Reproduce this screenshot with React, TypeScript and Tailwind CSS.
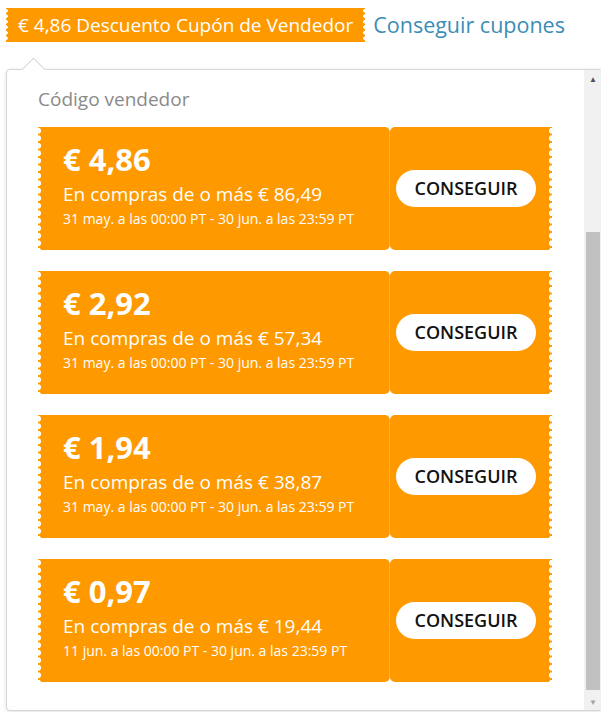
import React from "react";

const coupons = [
  { amount: "€ 4,86", min: "€ 86,49", dates: "31 may. a las 00:00 PT - 30 jun. a las 23:59 PT" },
  { amount: "€ 2,92", min: "€ 57,34", dates: "31 may. a las 00:00 PT - 30 jun. a las 23:59 PT" },
  { amount: "€ 1,94", min: "€ 38,87", dates: "31 may. a las 00:00 PT - 30 jun. a las 23:59 PT" },
  { amount: "€ 0,97", min: "€ 19,44", dates: "11 jun. a las 00:00 PT - 30 jun. a las 23:59 PT" },
];

function Coupon({ amount, min, dates }: { amount: string; min: string; dates: string }) {
  return (
    <div className="flex h-[123px] text-white">
      {/* left: details */}
      <div className="relative w-[352px] rounded-r-[5px] border-r border-dotted border-[#ffc46e] bg-[#ff9900] pl-[25px] pt-[14px]">
        <span className="absolute -left-[4px] top-0 bottom-0 w-[8px] bg-[radial-gradient(circle,#fff_2.8px,transparent_3.3px)] bg-[length:8px_7.5px]" />
        <div className="text-[31px] font-bold leading-[36px]">{amount}</div>
        <div className="mt-[5px] text-[19px] leading-[24px]">En compras de o más {min}</div>
        <div className="mt-[4px] text-[14px] leading-[18px]">{dates}</div>
      </div>
      {/* right: action */}
      <div className="relative flex w-[162px] items-center rounded-l-[5px] bg-[#ff9900] pl-[6px]">
        <button className="h-[37px] w-[140px] rounded-full bg-white text-[18px] font-semibold text-[#111]">
          CONSEGUIR
        </button>
        <span className="absolute -right-[4px] top-0 bottom-0 w-[8px] bg-[radial-gradient(circle,#fff_2.8px,transparent_3.3px)] bg-[length:8px_7.5px]" />
      </div>
    </div>
  );
}

export default function App() {
  return (
    <div className="h-[712px] w-[601px] overflow-hidden bg-white pt-[8px] font-['Open_Sans',sans-serif]">
      <div className="flex items-center pl-[6px]">
        <div className="relative flex h-[34px] items-center bg-[#ff9900] px-[12px] text-[19px] text-white">
          <span className="absolute -left-[2px] top-0 bottom-0 w-[4px] bg-[radial-gradient(circle,#fff_1.6px,transparent_2px)] bg-[length:4px_5.5px]" />
          € 4,86 Descuento Cupón de Vendedor
          <span className="absolute -right-[2px] top-0 bottom-0 w-[4px] bg-[radial-gradient(circle,#fff_1.6px,transparent_2px)] bg-[length:4px_5.5px]" />
        </div>
        <a href="#" className="ml-[8px] text-[21.5px] text-[#3b8db5]">
          Conseguir cupones
        </a>
      </div>

      <div className="relative ml-[6px] mt-[27px] flex h-[642px] w-[597px] rounded-[4px] border border-[#d6d6d6] bg-white shadow-[0_1px_4px_rgba(0,0,0,0.12)]">
        <span className="absolute -top-[9.5px] left-[18px] h-[17px] w-[17px] rotate-45 border-l border-t border-[#d6d6d6] bg-white" />
        <div className="flex-1 pl-[31px] pt-[16px]">
          <div className="text-[19px] leading-[26px] text-[#8a8a8a]">Código vendedor</div>
          <div className="mt-[15px] flex flex-col gap-[21px]">
            {coupons.map((c) => (
              <Coupon key={c.amount} {...c} />
            ))}
          </div>
        </div>
        {/* scrollbar */}
        <div className="flex w-[18px] flex-col bg-[#f1f1f1]">
          <div className="flex h-[17px] items-center justify-center text-[8px] leading-none text-[#505050]">▲</div>
          <div className="flex flex-1 flex-col pb-[3px] pt-[145px]">
            <div className="mx-[2px] flex-1 bg-[#c1c1c1]" />
          </div>
          <div className="flex h-[17px] items-center justify-center text-[8px] leading-none text-[#a3a3a3]">▼</div>
        </div>
      </div>
    </div>
  );
}
